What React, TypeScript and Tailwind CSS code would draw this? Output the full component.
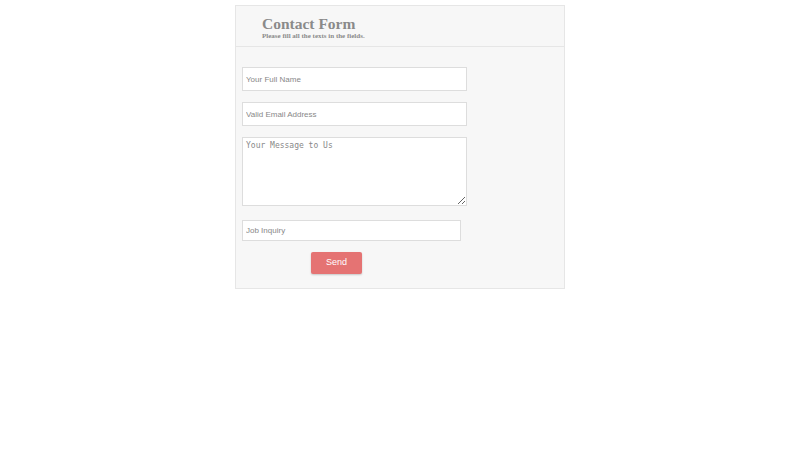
import React from 'react';

export default function App() {
    return (
        <div className="w-[800px] h-[450px] bg-white pt-[5px]">
            <div className="ml-[235px] w-[330px] h-[284px] bg-[#f7f7f7] border border-[#e6e6e6]">
                {/* Header */}
                <div className="h-[41px] border-b border-[#e6e6e6] pl-[26px] pt-[9px]" style={{ fontFamily: '"Liberation Serif", serif' }}>
                    <h1 className="text-[15.5px] leading-[17px] font-bold text-[#8a8a8a]">Contact Form</h1>
                    <p className="text-[7px] leading-[8px] font-bold text-[#8a8a8a]">Please fill all the texts in the fields.</p>
                </div>

                {/* Form */}
                <form className="flex flex-col pl-[6px] pt-[20px]" style={{ fontFamily: '"Liberation Sans", Arial, sans-serif' }}>
                    <input
                        type="text"
                        placeholder="Your Full Name"
                        className="w-[225px] h-[24px] bg-white border border-[#dddddd] px-[3px] text-[8px] text-[#555] placeholder:text-[#888] outline-none"
                    />
                    <input
                        type="text"
                        placeholder="Valid Email Address"
                        className="mt-[11px] w-[225px] h-[24px] bg-white border border-[#dddddd] px-[3px] text-[8px] text-[#555] placeholder:text-[#888] outline-none"
                    />
                    <textarea
                        placeholder="Your Message to Us"
                        className="mt-[11px] w-[225px] h-[69px] bg-white border border-[#dddddd] px-[3px] py-[2px] text-[8px] text-[#555] placeholder:text-[#888] outline-none resize-y"
                        style={{ fontFamily: '"DejaVu Sans Mono", monospace' }}
                    />
                    <input
                        type="text"
                        placeholder="Job Inquiry"
                        className="mt-[14px] w-[219px] h-[21px] bg-white border border-[#dddddd] px-[3px] text-[8px] text-[#555] placeholder:text-[#888] outline-none"
                    />
                    <button
                        type="button"
                        className="mt-[11px] ml-[69px] w-[51px] h-[22px] bg-[#e57373] rounded-[2px] text-white text-[9px] shadow-[0_1px_2px_rgba(0,0,0,0.2)]"
                    >
                        Send
                    </button>
                </form>
            </div>
        </div>
    );
}
